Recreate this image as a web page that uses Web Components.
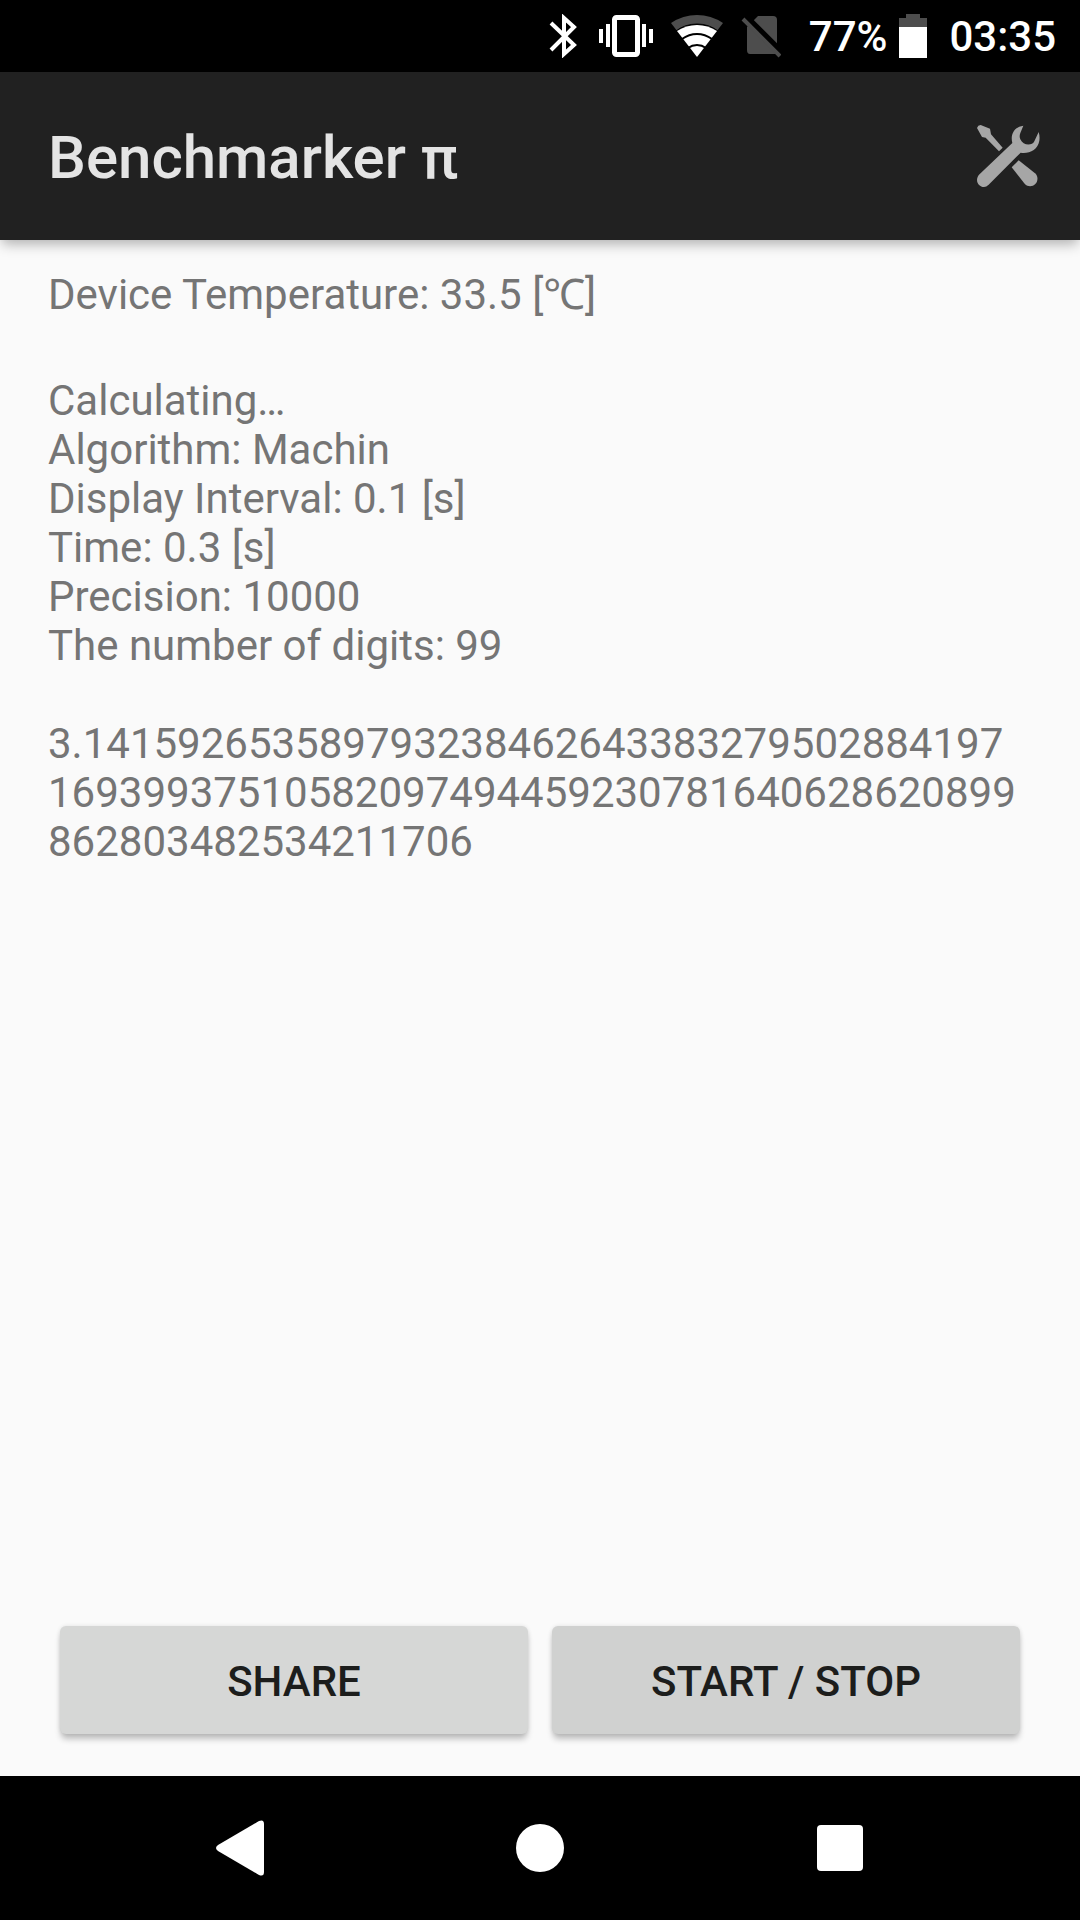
<!DOCTYPE html>
<html lang="en">
<head>
<meta charset="utf-8">
<meta name="viewport" content="width=device-width, initial-scale=1">
<title>Benchmarker π</title>
<style>
    body { margin: 0; background: #fafafa; font-family: Roboto, "Noto Sans", "Noto Sans CJK JP", sans-serif; font-size: 42px; line-height: 49px; }
</style>
</head>
<body>
<benchmark-app></benchmark-app>
<script>
class StatusBar extends HTMLElement {
    static get tagName() {
        return 'status-bar';
    }
    constructor() {
        super();
        this.shadow = this.attachShadow({mode: 'open'});
        this.shadow.innerHTML = `
            <style>
                :host { display: flex; align-items: center; justify-content: flex-end; height: 72px; padding: 0 24px; background: #000; color: #fff; font-weight: 500; }
                svg { display: block; flex: none; }
                .bluetooth { margin-right: 22px; }
                .vibrate { margin-right: 18px; }
                .wifi { margin-right: 18px; }
                .sim { margin-right: 28px; }
                .battery { margin: 0 22px 0 12px; }
            </style>
            <svg class="bluetooth" width="28" height="44" viewBox="0 0 28 44" fill="none" stroke="#fff" stroke-width="4" aria-hidden="true">
                <path d="M2 9 25 31 15 40V4L25 13 2 36"/>
            </svg>
            <svg class="vibrate" width="54" height="44" viewBox="0 0 54 44" fill="#fff" aria-hidden="true">
                <rect x="15.5" y="3.5" width="23" height="37" rx="2" fill="none" stroke="#fff" stroke-width="5"/>
                <path d="M0 15h4v14H0zM7 10h4v23H7zM43 10h4v23h-4zM50 15h4v14h-4z"/>
            </svg>
            <svg class="wifi" width="52" height="44" viewBox="0 0 52 44" aria-hidden="true">
                <path fill="#4d4d4d" d="M0 9Q12 1 26 1T52 9L26 43Z"/>
                <path d="M5 17Q14 10 26 10T47 17L26 43Z" stroke="#000" stroke-width="1"/>
                <path fill="#fff" d="M6 17Q15 11 26 11T46 17L26 43Z"/>
                <path d="M11 25Q18 20 26 20T41 25M17 34Q21 31 26 31T35 34" fill="none" stroke="#000" stroke-width="2"/>
            </svg>
            <svg class="sim" width="40" height="44" viewBox="0 0 40 44" aria-hidden="true">
                <path fill="#4d4d4d" d="M17 2H32Q36 2 36 6V40H9Q6 40 6 36V13Z"/>
                <path d="M2 1 40 39" stroke="#000" stroke-width="8"/>
                <path d="M2 5 39 42" stroke="#4d4d4d" stroke-width="4"/>
            </svg>
            <span><slot name="charge"></slot></span>
            <svg class="battery" width="28" height="44" viewBox="0 0 28 44" aria-hidden="true">
                <path fill="#4d4d4d" d="M7 0h14v4h7v10H0V4h7z"/>
                <path fill="#fff" d="M0 13h28v31H0z"/>
            </svg>
            <time><slot name="time"></slot></time>
        `;
    }
}
customElements.define(StatusBar.tagName, StatusBar);

class AppBar extends HTMLElement {
    static get tagName() {
        return 'app-bar';
    }
    constructor() {
        super();
        this.shadow = this.attachShadow({mode: 'open'});
        this.shadow.innerHTML = `
            <style>
                :host { display: flex; align-items: center; justify-content: space-between; height: 168px; padding-left: 48px; background: #212121; color: #e4e4e4; box-shadow: 0 6px 12px -2px rgba(0, 0, 0, 0.3); }
                h1 { margin: 0; padding-top: 4px; font-size: 60px; font-weight: 500; line-height: 70px; }
                button { display: flex; align-items: center; justify-content: center; width: 144px; height: 144px; padding: 0; border: 0; background: none; color: #a6a6a6; }
            </style>
            <h1><slot></slot></h1>
            <button type="button" aria-label="Settings">
                <svg width="64" height="64" viewBox="0 0 192 192" fill="currentColor" aria-hidden="true">
                    <path d="M3 12 7 5 14 3 42 14 45 31 80 71 69 82 29 41 18 39Z"/>
                    <path d="M142 5C116 8 102 31 109 57L9 152C-5 170 8 189 24 189Q31 189 38 182L134 86C158 90 186 78 190 50Q192 37 188 24L175 52C169 66 141 66 133 46Q129 37 133 27Z"/>
                    <path d="M128 109 107 130 146 179C166 200 197 173 179 149Z"/>
                </svg>
            </button>
        `;
        this.shadow.querySelector('button').addEventListener('click', () => {
            this.dispatchEvent(new CustomEvent('open-settings'));
        });
    }
}
customElements.define(AppBar.tagName, AppBar);

class ResultLog extends HTMLElement {
    static get tagName() {
        return 'result-log';
    }
    constructor() {
        super();
        this.shadow = this.attachShadow({mode: 'open'});
        this.shadow.innerHTML = `
            <style>
                :host { display: block; flex: 1; padding: 30px 48px; color: #757575; }
                ::slotted(p) { margin: 0 0 49px; overflow-wrap: anywhere; }
                ::slotted(p:first-child) { margin-bottom: 57px; }
            </style>
            <slot></slot>
        `;
    }
}
customElements.define(ResultLog.tagName, ResultLog);

class ActionButton extends HTMLElement {
    static get tagName() {
        return 'action-button';
    }
    constructor() {
        super();
        this.shadow = this.attachShadow({mode: 'open'});
        this.shadow.innerHTML = `
            <style>
                :host { display: block; flex: 1; }
                button { display: block; width: 100%; height: 108px; padding: 2px 0 0; border: 0; border-radius: 6px; background: var(--button-color, #d6d7d6); color: #1c1d1c; font: inherit; font-weight: 500; text-transform: uppercase; box-shadow: 0 6px 6px -1px rgba(0, 0, 0, 0.24), 0 0 4px rgba(0, 0, 0, 0.1); }
            </style>
            <button type="button"><slot></slot></button>
        `;
    }
}
customElements.define(ActionButton.tagName, ActionButton);

class NavigationBar extends HTMLElement {
    static get tagName() {
        return 'navigation-bar';
    }
    constructor() {
        super();
        this.shadow = this.attachShadow({mode: 'open'});
        this.shadow.innerHTML = `
            <style>
                :host { display: flex; height: 144px; padding: 0 90px; background: #000; color: #fff; }
                button { display: flex; flex: 1; align-items: center; justify-content: center; padding: 0; border: 0; background: none; color: inherit; }
            </style>
            <button type="button" aria-label="Back">
                <svg width="48" height="56" viewBox="0 0 48 56" fill="currentColor" aria-hidden="true">
                    <path d="M2 25 43 1Q48-1 48 4V52Q48 57 43 55L2 31Q-2 28 2 25Z"/>
                </svg>
            </button>
            <button type="button" aria-label="Home">
                <svg width="48" height="48" viewBox="0 0 48 48" fill="currentColor" aria-hidden="true">
                    <circle cx="24" cy="24" r="24"/>
                </svg>
            </button>
            <button type="button" aria-label="Overview">
                <svg width="46" height="46" viewBox="0 0 46 46" fill="currentColor" aria-hidden="true">
                    <rect width="46" height="46" rx="4"/>
                </svg>
            </button>
        `;
    }
}
customElements.define(NavigationBar.tagName, NavigationBar);

class BenchmarkApp extends HTMLElement {
    static get tagName() {
        return 'benchmark-app';
    }
    constructor() {
        super();
        this.shadow = this.attachShadow({mode: 'open'});
        this.shadow.innerHTML = `
            <style>
                :host { display: flex; flex-direction: column; min-height: 100vh; }
                main { display: flex; flex: 1; flex-direction: column; }
                .actions { display: flex; gap: 24px; padding: 0 60px 42px; }
                .toggle { --button-color: #d0d1d0; }
            </style>
            <status-bar>
                <span slot="charge">77%</span>
                <span slot="time">03:35</span>
            </status-bar>
            <app-bar>Benchmarker π</app-bar>
            <main>
                <result-log>
                    <p>Device Temperature: 33.5 [℃]</p>
                    <p>
                        Calculating…<br>
                        Algorithm: Machin<br>
                        Display Interval: 0.1 [s]<br>
                        Time: 0.3 [s]<br>
                        Precision: 10000<br>
                        The number of digits: 99
                    </p>
                    <p>3.141592653589793238462643383279502884197<br>16939937510582097494459230781640628620899<br>862803482534211706</p>
                </result-log>
                <div class="actions">
                    <action-button>Share</action-button>
                    <action-button class="toggle">Start / Stop</action-button>
                </div>
            </main>
            <navigation-bar></navigation-bar>
        `;
    }
}
customElements.define(BenchmarkApp.tagName, BenchmarkApp);
</script>
</body>
</html>
